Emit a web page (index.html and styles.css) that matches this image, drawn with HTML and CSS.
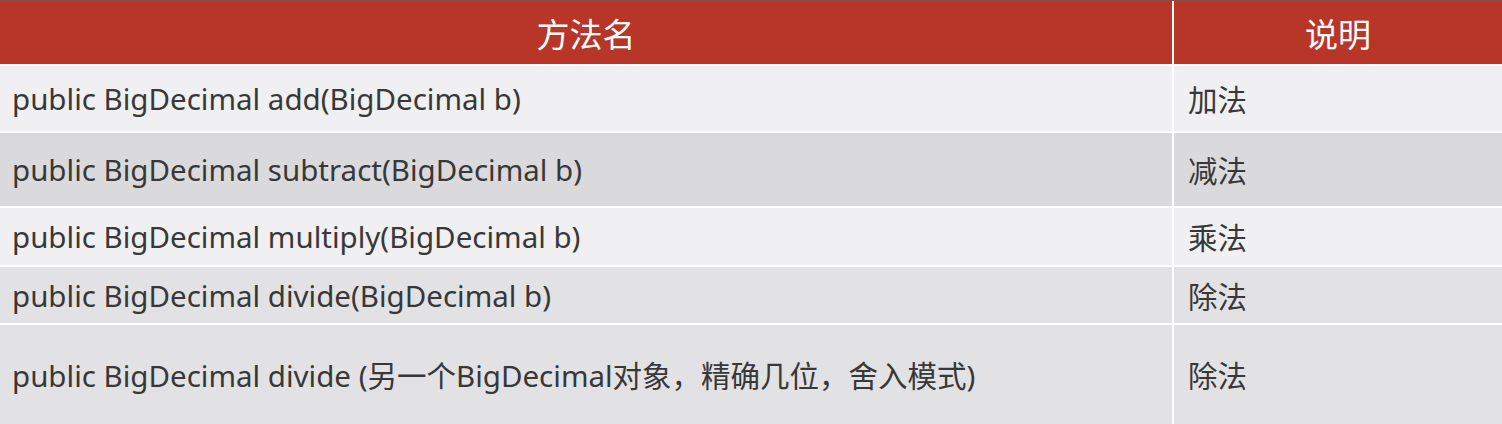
FILE: index.html
```html
<!DOCTYPE html>
<html lang="zh">
<head>
<meta charset="utf-8">
<title>BigDecimal 方法</title>
<link rel="stylesheet" href="styles.css">
</head>
<body>
<div class="table">
  <div class="cell head">方法名</div>
  <div class="cell head">说明</div>

  <div class="cell r1 light">public BigDecimal add(BigDecimal b)</div>
  <div class="cell r1 light">加法</div>

  <div class="cell r2 dark">public BigDecimal subtract(BigDecimal b)</div>
  <div class="cell r2 dark">减法</div>

  <div class="cell r3 light">public BigDecimal multiply(BigDecimal b)</div>
  <div class="cell r3 light">乘法</div>

  <div class="cell r4 mid">public BigDecimal divide(BigDecimal b)</div>
  <div class="cell r4 mid">除法</div>

  <div class="cell r5 mid">public BigDecimal divide (另一个BigDecimal对象，精确几位，舍入模式)</div>
  <div class="cell r5 mid">除法</div>
</div>
</body>
</html>
```

FILE: styles.css
```css
html, body {
  margin: 0;
  padding: 0;
  background: #ffffff;
}

body {
  width: 1502px;
  height: 424px;
  overflow: hidden;
  font-family: "Noto Sans", "Noto Sans CJK SC", sans-serif;
}

.table {
  display: grid;
  grid-template-columns: 1172px 1fr;
  grid-template-rows: 63px 65px 73px 57px 56px 99px;
  column-gap: 2px;
  row-gap: 2px;
  border-top: 1px solid #8c4a42;
  background: #ffffff;
}

.cell {
  display: flex;
  align-items: center;
  padding-left: 12px;
  font-size: 29.5px;
  color: #383838;
  white-space: nowrap;
}

.cell:nth-child(even) {
  padding-left: 14px;
}

.head {
  background: #b83627;
  color: #ffffff;
  font-size: 33px;
  justify-content: center;
  padding-left: 0;
}

.cell.head:nth-child(even) {
  padding-left: 0;
}

.light {
  background: #f0f0f2;
}

.dark {
  background: #dadadc;
}

.mid {
  background: #e2e2e4;
}
```
